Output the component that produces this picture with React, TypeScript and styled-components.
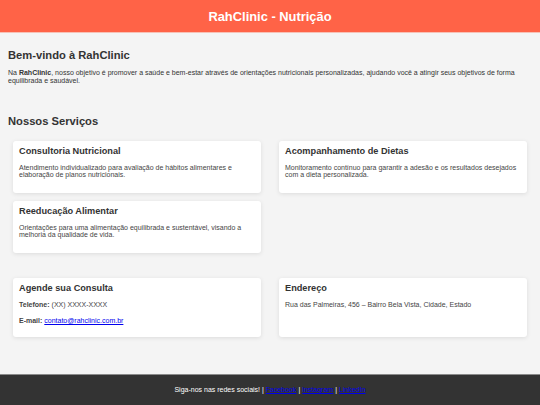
import React from "react";
import styled, { createGlobalStyle } from "styled-components";

const GlobalStyle = createGlobalStyle`
  body {
    margin: 0;
    background: #f4f4f4;
    color: #333;
    font-family: "Liberation Sans", Arial, sans-serif;
  }
`;

const Header = styled.header`
  background: #ff6347;
  height: 32px;
  display: flex;
  align-items: center;
  justify-content: center;
  box-shadow: 0 1px 0 #f7c1b6;
`;

const Title = styled.h1`
  margin: 0;
  color: #fff;
  font-size: 12.9px;
  font-weight: bold;
`;

const Main = styled.main`
  padding: 16.5px 8px 0;
`;

const Section = styled.section<{ $gap?: number }>`
  margin-bottom: ${(p) => p.$gap ?? 0}px;
`;

const SectionTitle = styled.h2`
  margin: 0;
  font-size: 11.2px;
  line-height: 13px;
  font-weight: bold;
  color: #333;
`;

const Intro = styled.p`
  margin: 7.3px 0 0;
  font-size: 7px;
  line-height: 8.1px;
  color: #333;
`;

const Grid = styled.div<{ $top: number }>`
  display: grid;
  grid-template-columns: 1fr 1fr;
  column-gap: 18px;
  row-gap: 8px;
  padding: 0 5px;
  margin-top: ${(p) => p.$top}px;
  align-items: start;
`;

const Card = styled.div<{ $bottom: number }>`
  background: #fff;
  border-radius: 3px;
  box-shadow: 0 1px 4px rgba(0, 0, 0, 0.1);
  padding: 5.5px 6px ${(p) => p.$bottom}px;
  align-self: stretch;
`;

const CardTitle = styled.h3`
  margin: 0;
  font-size: 9.2px;
  line-height: 11px;
  font-weight: bold;
  color: #333;
`;

const CardText = styled.p<{ $top?: number }>`
  margin: ${(p) => p.$top ?? 6.3}px 0 0;
  font-size: 7px;
  line-height: 7px;
  color: #444;

  a {
    color: #0000ee;
  }
`;

const Footer = styled.footer`
  margin-top: 38px;
  background: #333;
  color: #fff;
  height: 30px;
  display: flex;
  align-items: center;
  justify-content: center;
  font-size: 7px;
  box-shadow: 0 -1px 0 #8a8a8a;

  a {
    color: #0000ee;
  }
`;

const services = [
  {
    title: "Consultoria Nutricional",
    text: "Atendimento individualizado para avaliação de hábitos alimentares e elaboração de planos nutricionais.",
  },
  {
    title: "Acompanhamento de Dietas",
    text: "Monitoramento contínuo para garantir a adesão e os resultados desejados com a dieta personalizada.",
  },
  {
    title: "Reeducação Alimentar",
    text: "Orientações para uma alimentação equilibrada e sustentável, visando a melhoria da qualidade de vida.",
  },
];

export default function App() {
  return (
    <>
      <GlobalStyle />
      <Header>
        <Title>RahClinic - Nutrição</Title>
      </Header>
      <Main>
        <Section $gap={30.5}>
          <SectionTitle>Bem-vindo à RahClinic</SectionTitle>
          <Intro>
            Na <strong>RahClinic</strong>, nosso objetivo é promover a saúde e
            bem-estar através de orientações nutricionais personalizadas,
            ajudando você a atingir seus objetivos de forma equilibrada e
            saudável.
          </Intro>
        </Section>
        <Section>
          <SectionTitle>Nossos Serviços</SectionTitle>
          <Grid $top={12.5}>
            {services.map((s) => (
              <Card key={s.title} $bottom={15.2}>
                <CardTitle>{s.title}</CardTitle>
                <CardText>{s.text}</CardText>
              </Card>
            ))}
          </Grid>
        </Section>
        <Grid $top={25}>
          <Card $bottom={12.5}>
            <CardTitle>Agende sua Consulta</CardTitle>
            <CardText $top={7}>
              <strong>Telefone:</strong> (XX) XXXX-XXXX
            </CardText>
            <CardText $top={9}>
              <strong>E-mail:</strong>{" "}
              <a href="#">contato@rahclinic.com.br</a>
            </CardText>
          </Card>
          <Card $bottom={12.5}>
            <CardTitle>Endereço</CardTitle>
            <CardText $top={7}>
              Rua das Palmeiras, 456 – Bairro Bela Vista, Cidade, Estado
            </CardText>
          </Card>
        </Grid>
      </Main>
      <Footer>
        <span>
          Siga-nos nas redes sociais! | <a href="#">Facebook</a> |{" "}
          <a href="#">Instagram</a> | <a href="#">LinkedIn</a>
        </span>
      </Footer>
    </>
  );
}
